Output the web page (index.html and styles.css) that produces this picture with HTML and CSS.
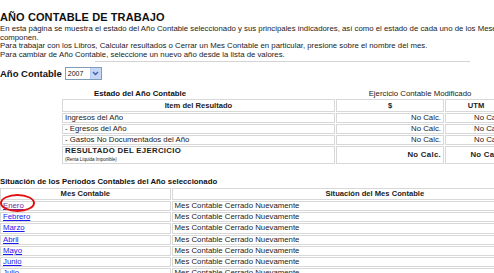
FILE: index.html
```html
<!DOCTYPE html>
<html lang="es">
<head>
    <meta charset="UTF-8">
    <title>Año Contable de Trabajo</title>
    <link rel="stylesheet" href="styles.css">
</head>
<body>
    <div class="page">
        <h2 class="title">AÑO CONTABLE DE TRABAJO</h2>
        <p class="intro">En esta página se muestra el estado del Año Contable seleccionado y sus principales indicadores, así como el estado de cada uno de los Meses que lo componen.</p>
        <p class="intro">Para trabajar con los Libros, Calcular resultados o Cerrar un Mes Contable en particular, presione sobre el nombre del mes.</p>
        <p class="intro">Para cambiar de Año Contable, seleccione un nuevo año desde la lista de valores.</p>
        <div class="rule"></div>

        <div class="year-row">
            <span class="year-label">Año Contable</span>
            <span class="select">
                <span class="select-value">2007</span>
                <span class="select-btn">
                    <svg width="7" height="5" viewBox="0 0 7 5"><path d="M1 1 L3.5 3.5 L6 1" fill="none" stroke="#3c5fa8" stroke-width="1.4"/></svg>
                </span>
            </span>
        </div>

        <div class="state-caption">
            <span class="cap-left">Estado del Año Contable</span>
            <span class="cap-right">Ejercicio Contable Modificado</span>
        </div>
        <table class="grid state">
            <colgroup><col class="w-item"><col class="w-money"><col class="w-utm"></colgroup>
            <thead>
                <tr><th>Item del Resultado</th><th>$</th><th>UTM</th></tr>
            </thead>
            <tbody>
                <tr><td>Ingresos del Año</td><td class="num">No Calc.</td><td class="num">No Calc.</td></tr>
                <tr><td>- Egresos del Año</td><td class="num">No Calc.</td><td class="num">No Calc.</td></tr>
                <tr><td>- Gastos No Documentados del Año</td><td class="num">No Calc.</td><td class="num">No Calc.</td></tr>
                <tr class="total">
                    <td><b>RESULTADO DEL EJERCICIO</b><br><small>(Renta Líquida Imponible)</small></td>
                    <td class="num"><b>No Calc.</b></td>
                    <td class="num"><b>No Calc.</b></td>
                </tr>
            </tbody>
        </table>

        <div class="periods-caption">Situación de los Períodos Contables del Año seleccionado</div>
        <table class="grid periods">
            <colgroup><col class="w-month"><col class="w-status"></colgroup>
            <thead>
                <tr><th>Mes Contable</th><th>Situación del Mes Contable</th></tr>
            </thead>
            <tbody>
                <tr><td><span class="marked"><a href="#" class="visited">Enero</a></span></td><td>Mes Contable Cerrado Nuevamente</td></tr>
                <tr><td><a href="#">Febrero</a></td><td>Mes Contable Cerrado Nuevamente</td></tr>
                <tr><td><a href="#">Marzo</a></td><td>Mes Contable Cerrado Nuevamente</td></tr>
                <tr><td><a href="#">Abril</a></td><td>Mes Contable Cerrado Nuevamente</td></tr>
                <tr><td><a href="#">Mayo</a></td><td>Mes Contable Cerrado Nuevamente</td></tr>
                <tr><td><a href="#">Junio</a></td><td>Mes Contable Cerrado Nuevamente</td></tr>
                <tr><td><a href="#">Julio</a></td><td>Mes Contable Cerrado Nuevamente</td></tr>
                <tr><td><a href="#">Agosto</a></td><td>Mes Contable Cerrado Nuevamente</td></tr>
            </tbody>
        </table>
    </div>
</body>
</html>
```

FILE: styles.css
```css
body { margin: 0; background: #fff; color: #111; font-family: "Liberation Sans", Arial, sans-serif; overflow: hidden; }
.page { width: 600px; padding: 12px 0 0 0; }
.title { margin: 0 0 2px 0; font-size: 11px; font-weight: bold; line-height: 11px; letter-spacing: 0.1px; }
.intro { margin: 0; font-size: 7.8px; line-height: 8.5px; color: #222; width: 540px; }
.rule { width: 375px; margin-left: 95px; border-bottom: 1px solid #d4d4d4; height: 2px; }
.year-row { display: flex; align-items: center; gap: 3px; margin-top: 4px; height: 14px; }
.year-label { font-size: 9.5px; font-weight: bold; }
.select { display: flex; align-items: stretch; border: 1px solid #7f9db9; height: 11px; }
.select-value { font-size: 7px; padding: 0 2px; line-height: 11px; width: 20px; }
.select-btn { width: 10px; background: #c6d6f7; display: flex; align-items: center; justify-content: center; border-left: 1px solid #b8cbf0; }
.state-caption { display: flex; margin-top: 8px; font-size: 7.8px; height: 10px; align-items: center; }
.cap-left { width: 280px; text-align: center; font-weight: bold; }
.cap-right { margin-left: 55px; width: 170px; text-align: center; color: #222; }
.grid { border-collapse: separate; border-spacing: 1px; table-layout: fixed; font-size: 7.8px; color: #222; }
.grid th, .grid td { border: 1px solid #d8d8d8; padding: 0 2px; height: 8px; line-height: 8px; white-space: nowrap; overflow: hidden; }
.grid th { font-weight: bold; font-size: 7.6px; height: 11px; }
.state { margin-left: 61px; width: 446px; }
.w-item { width: 273px; }
.w-money { width: 108px; }
.w-utm { width: 62px; }
.num { text-align: right; }
.total td { height: 15px; line-height: 7.5px; }
.total b { font-size: 7.8px; letter-spacing: 0.3px; }
.total small { font-size: 4.5px; }
.periods-caption { margin-top: 12px; font-weight: bold; font-size: 7.8px; height: 10px; line-height: 10px; }
.periods { margin-left: -1px; width: 580px; }
.periods th { height: 10px; }
.periods td { height: 8.2px; }
.periods td:first-child { overflow: visible; }
.w-month { width: 170px; }
.w-status { width: 405px; }
.periods a { color: #1a1aee; }
.periods a.visited { color: #7a2a9a; }
.marked { position: relative; display: inline-block; }
.marked::after { content: ""; position: absolute; left: -3px; top: -8px; width: 31px; height: 14px; border: 2.5px solid #e01010; border-radius: 50%; }
```
